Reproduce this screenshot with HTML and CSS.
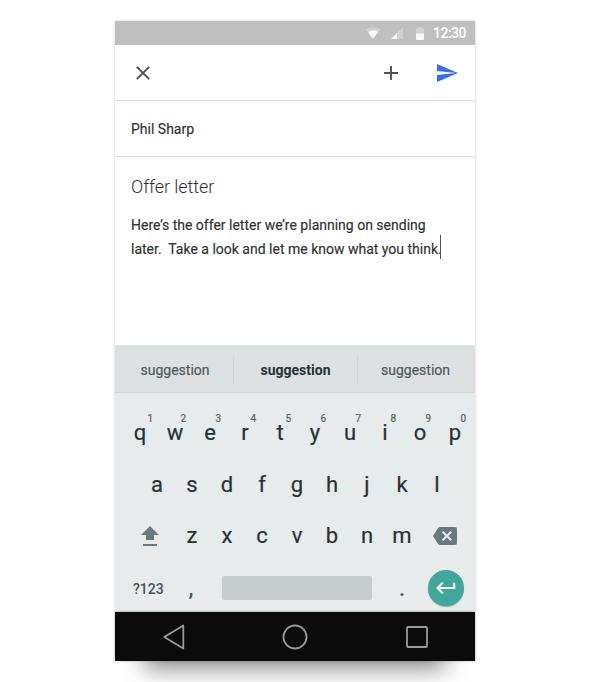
FILE: index.html
```html
<!DOCTYPE html>
<html lang="en">
<head>
<meta charset="utf-8">
<title>Compose</title>
<link rel="stylesheet" href="styles.css">
</head>
<body>
<main class="phone">
  <div class="screen">
    <header class="status">
      <svg class="wifi" width="14" height="12" viewBox="0 0 14 12"><path d="M0 2.6Q7-2.4 14 2.6L7 12Z" fill="#d2d2d2"/><path d="M2 5Q7 1.6 12 5L7 12Z" fill="#f8f8f8"/></svg>
      <svg class="signal" width="12" height="12" viewBox="0 0 12 12"><path d="M12 0V12H0Z" fill="#d2d2d2"/><path d="M6 6V12H0Z" fill="#f8f8f8"/></svg>
      <svg class="battery" width="8" height="13" viewBox="0 0 8 13"><path d="M0 2.2Q0 1.2 1 1.2H2.3V0H5.7V1.2H7Q8 1.2 8 2.2V7H0Z" fill="#d2d2d2"/><path d="M0 6.5H8V12Q8 13 7 13H1Q0 13 0 12Z" fill="#f8f8f8"/></svg>
      <span class="time">12:30</span>
    </header>
    <div class="toolbar">
      <svg class="close" width="14" height="14" viewBox="0 0 14 14"><path d="M.8.8L13.2 13.2M13.2.8L.8 13.2" stroke="#505050" stroke-width="1.9"/></svg>
      <svg class="add" width="14" height="14" viewBox="0 0 14 14"><path d="M7 0V14M0 7H14" stroke="#505050" stroke-width="1.9"/></svg>
      <svg class="send" width="21" height="18" viewBox="0 0 21 18"><path d="M0 18L21 9L0 0V7L19 9L0 11Z" fill="#366df3"/></svg>
    </div>
    <div class="recipient">Phil Sharp</div>
    <section class="message">
      <h1>Offer letter</h1>
      <p>Here’s the offer letter we’re planning on sending<br>later.&nbsp; Take a look and let me know what you think.<span class="caret"></span></p>
    </section>
    <section class="keyboard">
      <div class="suggestions"><span>suggestion</span><b>suggestion</b><span>suggestion</span></div>
      <div class="keys">
        <div class="row">
          <span class="key">q<sup>1</sup></span><span class="key">w<sup>2</sup></span><span class="key">e<sup>3</sup></span><span class="key">r<sup>4</sup></span><span class="key">t<sup>5</sup></span><span class="key">y<sup>6</sup></span><span class="key">u<sup>7</sup></span><span class="key">i<sup>8</sup></span><span class="key">o<sup>9</sup></span><span class="key">p<sup>0</sup></span>
        </div>
        <div class="row">
          <span class="key">a</span><span class="key">s</span><span class="key">d</span><span class="key">f</span><span class="key">g</span><span class="key">h</span><span class="key">j</span><span class="key">k</span><span class="key">l</span>
        </div>
        <div class="row">
          <span class="key wide"><svg class="shift" width="18" height="20" viewBox="0 0 18 20"><path d="M9 0L18 9H13V14H5V9H0Z" fill="#6b797e"/><path d="M2 18H16V20H2Z" fill="#6b797e"/></svg></span><span class="key">z</span><span class="key">x</span><span class="key">c</span><span class="key">v</span><span class="key">b</span><span class="key">n</span><span class="key">m</span><span class="key wide"><svg class="delete" width="24" height="18" viewBox="0 0 24 18"><path d="M7 0H22Q24 0 24 2V16Q24 18 22 18H7Q5.9 18 5.2 17L0 9L5.2 1Q5.9 0 7 0Z" fill="#6b797e"/><path d="M9.6 4.7L18.2 13.3M18.2 4.7L9.6 13.3" stroke="#e8ecec" stroke-width="2"/></svg></span>
        </div>
        <div class="row bottom">
          <span class="mode">?123</span><span class="punct comma">,</span><span class="space"></span><span class="punct period">.</span>
          <span class="enter"><svg width="20" height="12" viewBox="0 0 20 12"><path d="M18.2.8V6H1.6M6.7.8L1.5 6L6.7 11.2" fill="none" stroke="#fff" stroke-width="2"/></svg></span>
        </div>
      </div>
    </section>
    <nav class="nav">
      <svg width="22" height="26" viewBox="0 0 22 26"><path d="M20.3 1.5V24.5L1.3 13Z" fill="none" stroke="#9a9a9a" stroke-width="1.8" stroke-linejoin="round"/></svg>
      <svg width="26" height="26" viewBox="0 0 26 26"><circle cx="13" cy="13" r="11.5" fill="none" stroke="#9a9a9a" stroke-width="1.8"/></svg>
      <svg width="24" height="24" viewBox="0 0 24 24"><rect x="2" y="2" width="20" height="20" rx="1" fill="none" stroke="#9a9a9a" stroke-width="1.8"/></svg>
    </nav>
  </div>
</main>
</body>
</html>
```
FILE: styles.css
```css
* { box-sizing: border-box; }
body { margin: 0; background: #fff; font-family: Roboto, sans-serif; height: 682px; overflow: hidden; }
svg { display: block; flex: none; }
.phone { position: relative; width: 360px; margin: 0 auto; padding-top: 21px; }
.phone::before {
  content: ""; position: absolute; left: 30px; right: 30px; bottom: -7px; height: 50px;
  background: rgba(40, 34, 38, .58); filter: blur(12px);
}
.screen {
  position: relative; width: 360px; height: 640px; display: flex; flex-direction: column;
  background: #fff; box-shadow: 0 0 3px rgba(0, 0, 0, .2);
}
.status {
  height: 24px; background: #bfbfbf; display: flex; align-items: center;
  justify-content: flex-end; padding-right: 10px; color: #fff;
}
.wifi { margin-right: 11px; }
.signal { margin-right: 13px; }
.battery { margin-right: 9px; }
.time { font-size: 14px; font-weight: 500; line-height: 24px; width: 32px; letter-spacing: -.5px; }
.status { padding-right: 10px; }
.toolbar {
  height: 56px; border-bottom: 1px solid #e0e0e0; display: flex; align-items: center;
  padding: 1px 17px 0 21px;
}
.add { margin-left: auto; margin-right: 39px; }
.recipient {
  height: 56px; border-bottom: 1px solid #e0e0e0; padding: 0 16px; line-height: 56px;
  font-size: 14px; color: #303030; -webkit-text-stroke: .15px #303030;
}
.message { flex: 1; padding: 17px 16px 0; color: #303030; }
h1 { margin: 0; font-size: 18px; line-height: 26px; font-weight: 300; letter-spacing: -.05px; }
p { margin: 13px 0 0; font-size: 14px; line-height: 24px; white-space: nowrap; -webkit-text-stroke: .15px #303030; }
.caret { display: inline-block; width: 1px; height: 24px; background: #555; vertical-align: -10px; margin: -10px 0 -10px -1.5px; transform: translateY(-15px); }
.keyboard { height: 267px; background: #e7ebeb; color: #263238; }
.suggestions {
  height: 48px; background: #dce0e0; border-top: 1px solid #e4e7e7; border-bottom: 1px solid #d0d5d5;
  display: grid; grid-template-columns: 118px 125px 117px; align-items: center;
  text-align: center; font-size: 14px; line-height: 28px; padding-top: 1px; color: #4b575c;
}
.suggestions span { padding-left: 2px; -webkit-text-stroke: .15px #4b575c; }
.suggestions span:last-child { padding: 0 2px 0 0; }
.suggestions b { color: #263238; font-weight: 700; border: solid #ced3d3; border-width: 0 1px; }
.keys { padding-top: 14px; }
.row { height: 51.5px; display: flex; justify-content: center; align-items: center; }
.key {
  position: relative; width: 35px; height: 51.5px; display: flex;
  align-items: center; justify-content: center; font-size: 22px; -webkit-text-stroke: .2px #263238;
}
.row:first-child { padding-left: 5px; }
.row:nth-child(2), .row:nth-child(3) { padding-left: 4px; }
.key sup { position: absolute; left: 23px; top: 6px; font-size: 10px; line-height: 12px; color: #546166; -webkit-text-stroke: .2px #546166; }
.key:first-child sup { left: 25px; }
.wide { width: 50px; }
.bottom { justify-content: flex-start; padding: 2px 0 0 18px; }
.mode { width: 32px; font-size: 14px; font-weight: 500; color: #455359; padding-top: 1px; }
.punct { font-size: 22px; font-weight: 500; color: #455359; text-align: center; }
.comma { width: 20px; margin-left: 16px; }
.space { width: 150px; height: 24px; background: #c7cccf; border-radius: 2px; margin-left: 21px; }
.period { width: 20px; margin-left: 20px; }
.enter {
  width: 36px; height: 36px; border-radius: 50%; background: #40a89a; margin: -1px 0 0 16px;
  display: flex; align-items: center; justify-content: center; box-shadow: 0 1px 1px rgba(0, 0, 0, .3);
}
.nav {
  height: 49px; background: #0b0b0b; display: flex; justify-content: space-between;
  align-items: center; padding: 0 46px 0 48px; box-shadow: 0 -1px 2px rgba(0, 0, 0, .2);
}
```
